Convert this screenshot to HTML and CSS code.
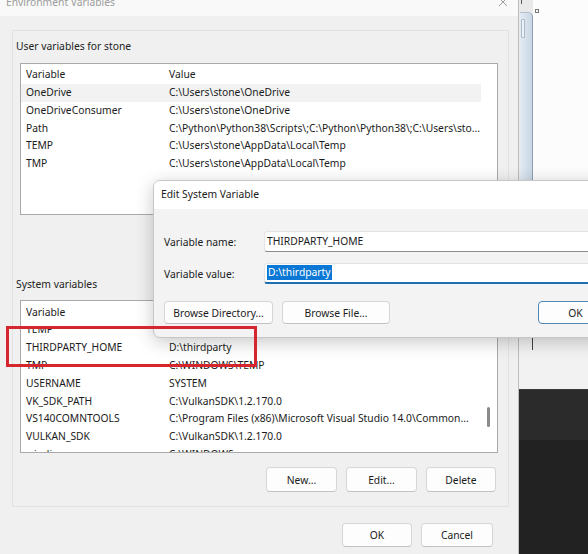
FILE: index.html
```html
<!DOCTYPE html>
<html>
<head>
<meta charset="utf-8">
<link rel="stylesheet" href="styles.css">
</head>
<body>
<div class="screen">
  <div class="main">
    <div class="titlebar">
      <span class="title">Environment Variables</span>
      <svg class="close" width="10" height="10" viewBox="0 0 10 10"><path d="M1 1L9 9M9 1L1 9" stroke="#a0a0a0" stroke-width="1" fill="none"/></svg>
    </div>
    <div class="panel">
      <div class="group-label">User variables for stone</div>
      <div class="list list-user">
        <div class="row head"><span class="c1">Variable</span><span class="c2">Value</span></div>
        <div class="row hover"><span class="c1">OneDrive</span><span class="c2">C:\Users\stone\OneDrive</span></div>
        <div class="row"><span class="c1">OneDriveConsumer</span><span class="c2">C:\Users\stone\OneDrive</span></div>
        <div class="row"><span class="c1">Path</span><span class="c2">C:\Python\Python38\Scripts\;C:\Python\Python38\;C:\Users\sto...</span></div>
        <div class="row"><span class="c1">TEMP</span><span class="c2">C:\Users\stone\AppData\Local\Temp</span></div>
        <div class="row"><span class="c1">TMP</span><span class="c2">C:\Users\stone\AppData\Local\Temp</span></div>
      </div>
      <div class="group-label sys">System variables</div>
      <div class="list list-sys">
        <div class="row head tall"><span class="c1">Variable</span><span class="c2">Value</span></div>
        <div class="viewport">
          <div class="rows scrolled">
            <div class="row"><span class="c1">TEMP</span><span class="c2">C:\WINDOWS\TEMP</span></div>
            <div class="row"><span class="c1">THIRDPARTY_HOME</span><span class="c2">D:\thirdparty</span></div>
            <div class="row"><span class="c1">TMP</span><span class="c2">C:\WINDOWS\TEMP</span></div>
            <div class="row"><span class="c1">USERNAME</span><span class="c2">SYSTEM</span></div>
            <div class="row"><span class="c1">VK_SDK_PATH</span><span class="c2">C:\VulkanSDK\1.2.170.0</span></div>
            <div class="row"><span class="c1">VS140COMNTOOLS</span><span class="c2">C:\Program Files (x86)\Microsoft Visual Studio 14.0\Common...</span></div>
            <div class="row"><span class="c1">VULKAN_SDK</span><span class="c2">C:\VulkanSDK\1.2.170.0</span></div>
            <div class="row"><span class="c1">windir</span><span class="c2">C:\WINDOWS</span></div>
          </div>
          <div class="thumb"></div>
        </div>
      </div>
      <div class="btn-row">
        <button class="btn w71">New...</button>
        <button class="btn w71">Edit...</button>
        <button class="btn w70">Delete</button>
      </div>
    </div>
    <div class="footer">
      <button class="btn fbtn w70">OK</button>
      <button class="btn fbtn w72">Cancel</button>
    </div>
  </div>

  <div class="side">
    <div class="side-top">
      <div class="vscroll">
        <div class="cap"><span class="tick"></span></div>
        <div class="bar"><div class="bar-thumb"></div></div>
      </div>
      <div class="pane"><span class="handle"></span></div>
    </div>
    <div class="side-mid"><span class="caret"></span></div>
    <div class="side-dark"><div class="band"></div></div>
  </div>

  <div class="dialog">
    <div class="dlg-title">Edit System Variable</div>
    <div class="dlg-body">
      <div class="field">
        <span class="flabel">Variable name:</span>
        <div class="tbox">THIRDPARTY_HOME</div>
      </div>
      <div class="field second">
        <span class="flabel">Variable value:</span>
        <div class="tbox focused"><span class="sel">D:\thirdparty</span></div>
      </div>
      <div class="dlg-buttons">
        <button class="btn dbtn w109">Browse Directory...</button>
        <button class="btn dbtn w108">Browse File...</button>
        <button class="btn dbtn default w75">OK</button>
      </div>
    </div>
  </div>

  <div class="marker"></div>
</div>
</body>
</html>
```

FILE: styles.css
```css
* { box-sizing: border-box; }
html, body { margin: 0; padding: 0; }
body {
  width: 588px;
  height: 554px;
  overflow: hidden;
  font-family: "Noto Sans", "Open Sans", sans-serif;
  font-size: 10.3px;
  color: #1b1b1b;
  background: #f0f0f0;
}
.screen {
  position: relative;
  display: flex;
  width: 588px;
  height: 554px;
  overflow: hidden;
}

/* main window */
.main {
  width: 519px;
  height: 554px;
  flex: none;
  background: #f0f0f0;
  border-right: 1px solid #bdbdbd;
  display: flex;
  flex-direction: column;
}
.titlebar {
  height: 16px;
  background: #f9f9f9;
  display: flex;
  justify-content: space-between;
  align-items: flex-start;
  padding: 0 10px 0 6px;
  overflow: hidden;
}
.title {
  color: #9c9c9c;
  line-height: 14px;
  margin-top: -5px;
}
.close { margin-top: -3px; }

.panel {
  margin: 14px 0 0 12px;
  width: 497px;
  border: 1px solid #e2e2e2;
  padding: 7px 12px 14px 3px;
}
.group-label {
  line-height: 16px;
  margin-bottom: 9px;
  color: #222;
}
.group-label.sys {
  margin-top: 61px;
  margin-bottom: 8px;
}
.list {
  margin-left: 4px;
  width: 478px;
  background: #fff;
  border: 1px solid #a9a9a9;
  overflow: hidden;
}
.list-user { height: 152px; }
.list-sys { height: 153px; }
.row {
  display: flex;
  width: 460px;
  height: 17.8px;
  line-height: 17.8px;
  white-space: nowrap;
  overflow: hidden;
}
.row.head {
  height: 20px;
  line-height: 18px;
  padding-top: 1px;
}
.row.head.tall {
  height: 25px;
  padding-top: 2px;
}
.row.hover { background: #f2f2f2; }
.c1 {
  width: 143px;
  flex: none;
  padding-left: 5px;
  overflow: hidden;
}
.c2 {
  flex: 1;
  padding-left: 5px;
  overflow: hidden;
}
.viewport {
  position: relative;
  height: 126px;
  overflow: hidden;
}
.rows.scrolled { margin-top: -4.6px; }
.thumb {
  position: absolute;
  left: 466px;
  top: 81px;
  width: 3px;
  height: 20px;
  background: #8a8a8a;
  border-radius: 1.5px;
}

.btn {
  font-family: inherit;
  font-size: 10.3px;
  color: #1b1b1b;
  background: #fdfdfd;
  border: 1px solid #d6d6d6;
  border-bottom-color: #c2c2c2;
  border-radius: 4px;
  padding: 0;
  height: 25px;
  line-height: 22px;
}
.w70 { width: 70px; }
.w71 { width: 71px; }
.w72 { width: 72px; }
.w75 { width: 75px; }
.w108 { width: 108px; }
.w109 { width: 109px; }
.btn-row {
  display: flex;
  justify-content: flex-end;
  gap: 9px;
  margin-top: 14px;
}
.footer {
  display: flex;
  justify-content: flex-end;
  gap: 9px;
  margin-top: 16px;
  padding-right: 25px;
}
.fbtn { height: 24px; }

/* background windows on the right */
.side {
  flex: 1;
  display: flex;
  flex-direction: column;
}
.side-top {
  height: 180px;
  display: flex;
}
.vscroll {
  width: 14px;
  display: flex;
  flex-direction: column;
  background: #e9e9e9;
}
.cap {
  height: 12px;
  padding-left: 2px;
}
.tick {
  display: block;
  width: 1px;
  height: 4px;
  background: #555;
}
.bar {
  flex: 1;
  margin-left: 1px;
  background: linear-gradient(90deg, #e3ebf3, #c8d6e4);
  border-right: 1px solid #8d9fb2;
  border-top: 1px solid #b0c0cf;
  border-top-right-radius: 5px;
  padding: 6px 0 0 1px;
}
.bar-thumb {
  width: 4px;
  height: 19px;
  background: #eef3f8;
  border: 1px solid #a9b9c9;
  border-radius: 1px;
}
.pane {
  flex: 1;
  background: #fcfcfc;
  padding: 9px 0 0 2px;
}
.handle {
  display: block;
  width: 4px;
  height: 4px;
  border: 1px solid #777;
}
.side-mid {
  height: 209px;
  background: #f2f2f2;
  padding: 158px 0 0 13px;
}
.caret {
  display: block;
  width: 1px;
  height: 12px;
  background: #444;
}
.side-dark {
  flex: 1;
  background: #222;
}
.band {
  height: 51px;
  background: #2b2b2b;
  border-top: 1px solid #3a3a3a;
}

/* edit dialog */
.dialog {
  position: absolute;
  left: 153px;
  top: 180px;
  width: 471px;
  height: 158px;
  background: #f3f3f3;
  border: 1px solid #c6c6c6;
  border-radius: 7px;
  box-shadow: 0 4px 18px rgba(0, 0, 0, 0.22);
  overflow: hidden;
}
.dlg-title {
  height: 28px;
  background: #fff;
  padding: 5px 0 0 7px;
  line-height: 16px;
}
.dlg-body {
  padding: 22px 10px 0 10px;
}
.field {
  display: flex;
  align-items: center;
}
.field.second { margin-top: 11px; }
.flabel {
  width: 100px;
  flex: none;
}
.tbox {
  flex: 1;
  height: 21px;
  background: #fff;
  border: 1px solid #e3e3e3;
  border-bottom: 1px solid #8c8c8c;
  border-radius: 3px;
  padding: 0 0 0 2px;
  line-height: 19px;
}
.tbox.focused {
  border-bottom: 2px solid #1c6eae;
  line-height: 18px;
}
.sel {
  background: #0a78d4;
  color: #fff;
  padding: 0 1px;
  display: inline-block;
  line-height: 15px;
  margin-top: 1px;
  vertical-align: top;
}
.dlg-buttons {
  display: flex;
  gap: 9px;
  margin-top: 17px;
}
.dbtn { height: 23px; line-height: 20px; }
.default {
  margin-left: auto;
  border-color: #4f86b4;
}

/* annotation */
.marker {
  position: absolute;
  left: 6px;
  top: 326px;
  width: 251px;
  height: 41px;
  border: 3px solid #d6262d;
  z-index: 5;
}
```
